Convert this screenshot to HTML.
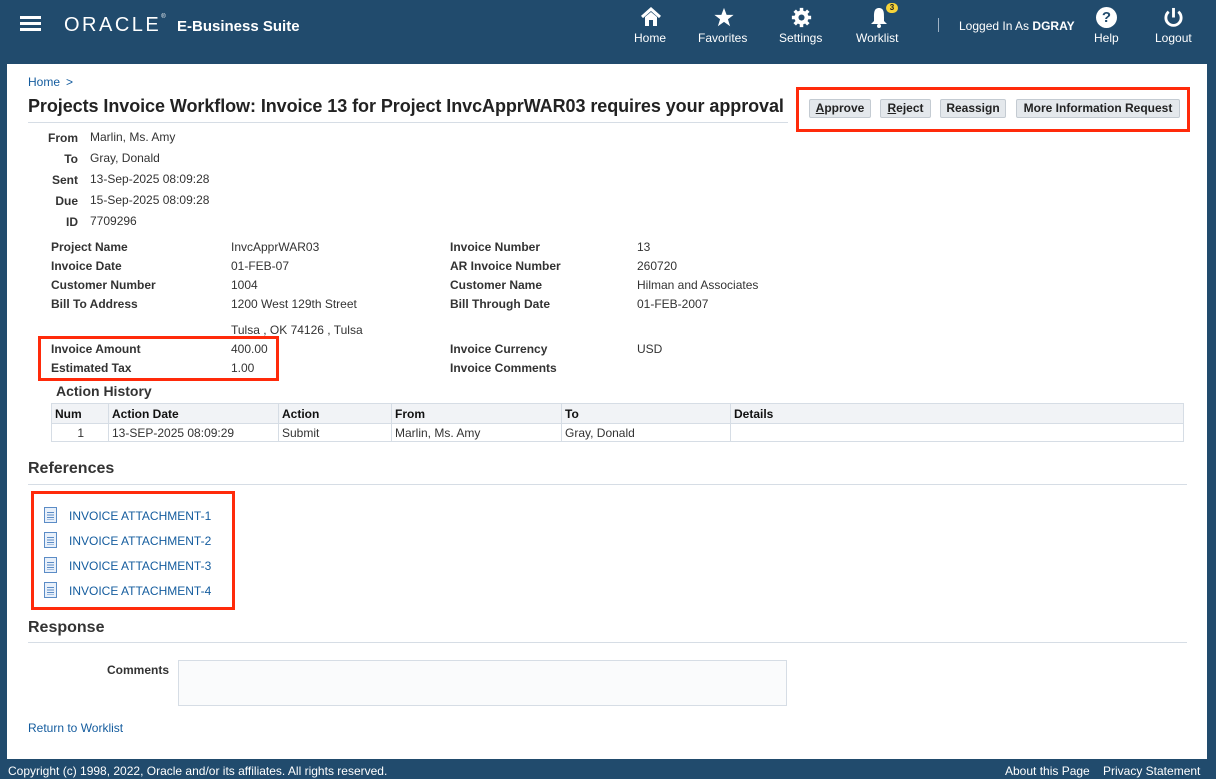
<!DOCTYPE html>
<html><head><meta charset="utf-8"><style>
*{margin:0;padding:0;box-sizing:border-box}
body{width:1216px;height:779px;background:#214b6d;font-family:"Liberation Sans",Arial,sans-serif;font-size:12px;color:#333;position:relative;overflow:hidden}
.a{position:absolute;white-space:nowrap}
.w{color:#fff}
.nav{position:absolute;top:31px;color:#fff;font-size:12px;text-align:center}
.main{position:absolute;left:7px;top:64px;width:1200px;height:695px;background:#fff}
.lbl{font-weight:bold;color:#333}
.btn{position:absolute;top:99px;height:19px;background:#e4e8ec;border:1px solid #c4cbd2;border-radius:2px;font-weight:bold;font-size:12px;color:#222;text-align:center;line-height:17px}
.red{position:absolute;border:3px solid #ff2a0a}
a{color:#145c9e;text-decoration:none}
table{border-collapse:collapse;position:absolute;left:51px;top:403px;width:1133px;font-size:12px}
th{background:#f1f3f6;text-align:left;font-weight:bold;color:#111;height:20px;padding-left:3px;border:1px solid #d6dde5}
td{height:18px;padding-left:3px;border:1px solid #d6dde5;color:#333}
.doc{position:absolute;left:44px;width:13px;height:16px;border:1px solid #5b8cc6;background:#e8f0fa}
.doc:after{content:"";position:absolute;left:2px;right:2px;top:4px;height:8px;background:repeating-linear-gradient(#5b8cc6 0 1px,transparent 1px 2.5px)}
</style></head><body>
<div class="a" style="left:20px;top:16px;width:21px;height:3px;background:#fff;box-shadow:0 6px 0 #fff,0 12px 0 #fff"></div>
<div class="a w" style="left:64px;top:14px;font-size:20px;letter-spacing:2.5px">ORACLE<span style="font-size:6px;vertical-align:top;letter-spacing:0">®</span></div>
<div class="a w" style="left:177px;top:18px;font-size:15px;font-weight:bold">E-Business Suite</div>
<svg class="a" style="left:640px;top:7px" width="22" height="20" viewBox="0 0 22 20"><path d="M2 10 L11 2 L20 10" stroke="#fff" stroke-width="3" fill="none"/><path d="M5 10 V19 H9 V13 H13 V19 H17 V10 L11 5 Z" fill="#fff"/></svg>
<div class="nav" style="left:634px">Home</div>
<svg class="a" style="left:713px;top:7px" width="22" height="21" viewBox="0 0 24 24"><path d="M12 1 L15 9 L23 9 L16.5 14 L19 22 L12 17 L5 22 L7.5 14 L1 9 L9 9Z" fill="#fff"/></svg>
<div class="nav" style="left:698px">Favorites</div>
<svg class="a" style="left:791px;top:7px" width="21" height="21" viewBox="0 0 24 24"><g fill="#fff"><circle cx="12" cy="12" r="8"/><rect x="10" y="1" width="4" height="22"/><rect x="1" y="10" width="22" height="4"/><rect x="10" y="1" width="4" height="22" transform="rotate(45 12 12)"/><rect x="10" y="1" width="4" height="22" transform="rotate(-45 12 12)"/></g><circle cx="12" cy="12" r="3.5" fill="#214b6d"/></svg>
<div class="nav" style="left:779px">Settings</div>
<svg class="a" style="left:870px;top:7px" width="18" height="21" viewBox="0 0 18 21"><path d="M9 1 C4 1 4 6 4 10 L4 14 L1 17 H17 L14 14 L14 10 C14 6 14 1 9 1Z" fill="#fff"/><circle cx="9" cy="19" r="2" fill="#fff"/></svg>
<div class="a" style="left:886px;top:3px;width:12px;height:10px;border-radius:5px;background:#f5d33a;color:#222;font-size:8px;font-weight:bold;text-align:center;line-height:10px">3</div>
<div class="nav" style="left:856px">Worklist</div>
<div class="a" style="left:938px;top:18px;width:1px;height:14px;background:#9fb3c6"></div>
<div class="a w" style="left:959px;top:19px">Logged In As <b>DGRAY</b></div>
<div class="a" style="left:1096px;top:7px;width:21px;height:21px;border-radius:50%;background:#fff;color:#214b6d;font-weight:bold;font-size:15px;text-align:center;line-height:21px">?</div>
<div class="nav" style="left:1094px">Help</div>
<svg class="a" style="left:1163px;top:7px" width="21" height="21" viewBox="0 0 22 22"><path d="M6 5 A8 8 0 1 0 16 5" stroke="#fff" stroke-width="3" fill="none"/><rect x="9.5" y="1" width="3" height="10" fill="#fff"/></svg>
<div class="nav" style="left:1155px">Logout</div>

<div class="main"></div>
<div class="a"><a class="a" style="left:28px;top:75px">Home</a><span class="a" style="left:66px;top:75px;color:#145c9e">&gt;</span></div>
<div class="a" style="left:28px;top:96px;font-size:18px;font-weight:bold;color:#222;letter-spacing:-0.07px">Projects Invoice Workflow: Invoice 13 for Project InvcApprWAR03 requires your approval</div>
<div class="a" style="left:28px;top:122px;width:760px;height:1px;background:#d6dde5"></div>
<div class="red" style="left:796px;top:87px;width:394px;height:45px"></div>
<div class="btn" style="left:809px;width:62px"><u>A</u>pprove</div>
<div class="btn" style="left:880px;width:51px"><u>R</u>eject</div>
<div class="btn" style="left:940px;width:66px">Reassign</div>
<div class="btn" style="left:1016px;width:164px">More Information Request</div>

<div class="a lbl" style="right:1138px;top:131px">From</div><div class="a" style="left:90px;top:130px">Marlin, Ms. Amy</div>
<div class="a lbl" style="right:1138px;top:152px">To</div><div class="a" style="left:90px;top:151px">Gray, Donald</div>
<div class="a lbl" style="right:1138px;top:173px">Sent</div><div class="a" style="left:90px;top:172px">13-Sep-2025 08:09:28</div>
<div class="a lbl" style="right:1138px;top:194px">Due</div><div class="a" style="left:90px;top:193px">15-Sep-2025 08:09:28</div>
<div class="a lbl" style="right:1138px;top:215px">ID</div><div class="a" style="left:90px;top:214px">7709296</div>

<div class="a lbl" style="left:51px;top:240px">Project Name</div><div class="a" style="left:231px;top:240px">InvcApprWAR03</div>
<div class="a lbl" style="left:51px;top:259px">Invoice Date</div><div class="a" style="left:231px;top:259px">01-FEB-07</div>
<div class="a lbl" style="left:51px;top:278px">Customer Number</div><div class="a" style="left:231px;top:278px">1004</div>
<div class="a lbl" style="left:51px;top:297px">Bill To Address</div><div class="a" style="left:231px;top:297px">1200 West 129th Street</div>
<div class="a" style="left:231px;top:323px">Tulsa , OK 74126 , Tulsa</div>
<div class="a lbl" style="left:51px;top:342px">Invoice Amount</div><div class="a" style="left:231px;top:342px">400.00</div>
<div class="a lbl" style="left:51px;top:361px">Estimated Tax</div><div class="a" style="left:231px;top:361px">1.00</div>
<div class="red" style="left:38px;top:336px;width:241px;height:45px"></div>
<div class="a lbl" style="left:450px;top:240px">Invoice Number</div><div class="a" style="left:637px;top:240px">13</div>
<div class="a lbl" style="left:450px;top:259px">AR Invoice Number</div><div class="a" style="left:637px;top:259px">260720</div>
<div class="a lbl" style="left:450px;top:278px">Customer Name</div><div class="a" style="left:637px;top:278px">Hilman and Associates</div>
<div class="a lbl" style="left:450px;top:297px">Bill Through Date</div><div class="a" style="left:637px;top:297px">01-FEB-2007</div>
<div class="a lbl" style="left:450px;top:342px">Invoice Currency</div><div class="a" style="left:637px;top:342px">USD</div>
<div class="a lbl" style="left:450px;top:361px">Invoice Comments</div>

<div class="a" style="left:56px;top:383px;font-size:14px;font-weight:bold;color:#333">Action History</div>
<table><tr><th style="width:57px">Num</th><th style="width:170px">Action Date</th><th style="width:113px">Action</th><th style="width:170px">From</th><th style="width:169px">To</th><th>Details</th></tr>
<tr><td style="text-align:right;padding-right:24px">1</td><td>13-SEP-2025 08:09:29</td><td>Submit</td><td>Marlin, Ms. Amy</td><td>Gray, Donald</td><td></td></tr></table>

<div class="a" style="left:28px;top:460px;font-size:16px;font-weight:bold;color:#333">References</div>
<div class="a" style="left:28px;top:484px;width:1159px;height:1px;background:#d6dde5"></div>
<div class="red" style="left:31px;top:491px;width:204px;height:119px"></div>
<div class="doc" style="top:507px"></div><a class="a" style="left:69px;top:509px">INVOICE ATTACHMENT-1</a>
<div class="doc" style="top:532px"></div><a class="a" style="left:69px;top:534px">INVOICE ATTACHMENT-2</a>
<div class="doc" style="top:557px"></div><a class="a" style="left:69px;top:559px">INVOICE ATTACHMENT-3</a>
<div class="doc" style="top:582px"></div><a class="a" style="left:69px;top:584px">INVOICE ATTACHMENT-4</a>

<div class="a" style="left:28px;top:619px;font-size:16px;font-weight:bold;color:#333">Response</div>
<div class="a" style="left:28px;top:642px;width:1159px;height:1px;background:#d6dde5"></div>
<div class="a lbl" style="left:107px;top:663px">Comments</div>
<div class="a" style="left:178px;top:660px;width:609px;height:46px;border:1px solid #d6dde5;background:#fafbfc"></div>
<a class="a" style="left:28px;top:721px">Return to Worklist</a>

<div class="a w" style="left:8px;top:764px">Copyright (c) 1998, 2022, Oracle and/or its affiliates. All rights reserved.</div>
<div class="a w" style="left:1005px;top:764px">About this Page</div>
<div class="a w" style="left:1103px;top:764px">Privacy Statement</div>
</body></html>
